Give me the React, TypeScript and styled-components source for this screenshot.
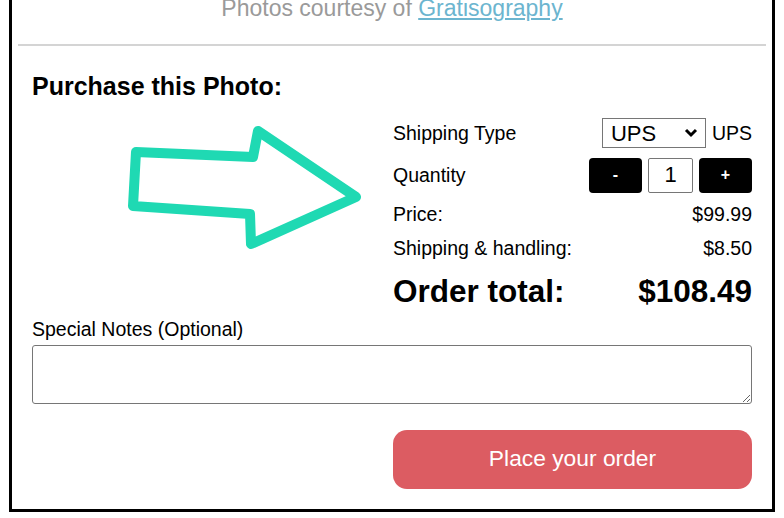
import React from "react";
import styled, { createGlobalStyle } from "styled-components";

const Global = createGlobalStyle`
  html, body { margin: 0; padding: 0; background: #fff; }
  body { font-family: "Liberation Sans", Arial, sans-serif; color: #000; overflow: hidden; }
`;

const Page = styled.div`
  width: 784px;
  height: 518px;
  padding-left: 9px;
  box-sizing: border-box;
  overflow: hidden;
`;

const Frame = styled.div`
  width: 766px;
  box-sizing: border-box;
  border: 3px solid #000;
  border-top: none;
  margin-top: -5px;
`;

const Caption = styled.p`
  margin: 0 0 22px;
  text-align: center;
  font-size: 23px;
  line-height: 27px;
  color: #9a9a9a;
`;

const CaptionLink = styled.a`
  color: #6cb5cf;
  text-decoration: underline;
`;

const Rule = styled.hr`
  margin: 0 6px;
  border: none;
  border-top: 2px solid #d4d4d4;
  height: 0;
`;

const Section = styled.section`
  padding: 25px 20px 20px;
`;

const Heading = styled.h2`
  margin: 0 0 15px;
  font-size: 25px;
  line-height: 30px;
  font-weight: 700;
`;

const Columns = styled.div`
  display: grid;
  grid-template-columns: 1fr 359px;
  column-gap: 13px;
`;

const ArrowArea = styled.div`
  display: flex;
  align-items: flex-start;
`;

const Details = styled.div`
  display: flex;
  flex-direction: column;
`;

const Row = styled.div<{ $h: number; $gap?: number }>`
  display: flex;
  align-items: center;
  justify-content: space-between;
  height: ${(p) => p.$h}px;
  margin-bottom: ${(p) => p.$gap ?? 0}px;
  font-size: 19.5px;
`;

const TotalRow = styled(Row)`
  font-size: 31.5px;
  font-weight: 700;
`;

const Controls = styled.div`
  display: flex;
  align-items: center;
  gap: 6px;
`;

const SelectWrap = styled.div`
  position: relative;
  width: 104px;
  height: 30px;
`;

const Select = styled.select`
  appearance: none;
  width: 104px;
  height: 30px;
  font-family: "Liberation Sans", Arial, sans-serif;
  font-size: 22px;
  border: 1px solid #767676;
  border-radius: 0;
  background: #fff;
  color: #000;
  padding: 0 4px 0 8px;
`;

const Chevron = styled.svg`
  position: absolute;
  right: 8px;
  top: 10px;
  pointer-events: none;
`;

const StepButton = styled.button`
  width: 53px;
  height: 35px;
  border: none;
  border-radius: 4px;
  background: #000;
  color: #fff;
  font-family: "Liberation Sans", Arial, sans-serif;
  font-size: 16px;
  font-weight: 700;
  padding: 0;
`;

const QtyInput = styled.input`
  width: 45px;
  height: 35px;
  box-sizing: border-box;
  border: 1px solid #767676;
  border-radius: 2px;
  text-align: center;
  font-family: "Liberation Sans", Arial, sans-serif;
  font-size: 22px;
  padding: 0;
`;

const NotesLabel = styled.label`
  display: block;
  margin-top: 2px;
  font-size: 19.5px;
  line-height: 22px;
`;

const Notes = styled.textarea`
  display: block;
  width: 720px;
  height: 59px;
  box-sizing: border-box;
  margin-top: 5px;
  border: 1px solid #767676;
  border-radius: 3px;
  font-family: "Liberation Sans", Arial, sans-serif;
`;

const Footer = styled.div`
  display: flex;
  justify-content: flex-end;
  margin-top: 26px;
`;

const OrderButton = styled.button`
  width: 359px;
  height: 59px;
  border: none;
  border-radius: 14px;
  background: #dc5c62;
  color: #fff;
  font-family: "Liberation Sans", Arial, sans-serif;
  font-size: 22.8px;
  padding: 0 0 3px;
`;

const Arrow = () => (
  <svg width="348" height="200" viewBox="32 116 348 200" fill="none">
    <polygon
      points="136,152 253,157 258,131 356,197 251,244 250,214 133,206"
      stroke="#1fd9b3"
      strokeWidth="10"
      strokeLinejoin="round"
    />
  </svg>
);

export default function App() {
  return (
    <>
      <Global />
      <Page>
        <Frame>
          <Caption>
            Photos courtesy of <CaptionLink href="#">Gratisography</CaptionLink>
          </Caption>
          <Rule />
          <Section>
            <Heading>Purchase this Photo:</Heading>
            <Columns>
              <ArrowArea>
                <Arrow />
              </ArrowArea>
              <Details>
                <Row $h={34} $gap={6}>
                  <span>Shipping Type</span>
                  <Controls>
                    <SelectWrap>
                      <Select defaultValue="UPS">
                        <option>UPS</option>
                        <option>FedEx</option>
                      </Select>
                      <Chevron width="14" height="10" viewBox="0 0 14 10">
                        <polyline
                          points="2,2 7,7 12,2"
                          fill="none"
                          stroke="#000"
                          strokeWidth="3"
                        />
                      </Chevron>
                    </SelectWrap>
                    <span>UPS</span>
                  </Controls>
                </Row>
                <Row $h={38} $gap={6}>
                  <span>Quantity</span>
                  <Controls>
                    <StepButton>-</StepButton>
                    <QtyInput defaultValue="1" />
                    <StepButton>+</StepButton>
                  </Controls>
                </Row>
                <Row $h={28} $gap={6}>
                  <span>Price:</span>
                  <span>$99.99</span>
                </Row>
                <Row $h={28} $gap={10}>
                  <span>Shipping &amp; handling:</span>
                  <span>$8.50</span>
                </Row>
                <TotalRow $h={38}>
                  <span>Order total:</span>
                  <span>$108.49</span>
                </TotalRow>
              </Details>
            </Columns>
            <NotesLabel htmlFor="notes">Special Notes (Optional)</NotesLabel>
            <Notes id="notes" />
            <Footer>
              <OrderButton>Place your order</OrderButton>
            </Footer>
          </Section>
        </Frame>
      </Page>
    </>
  );
}
